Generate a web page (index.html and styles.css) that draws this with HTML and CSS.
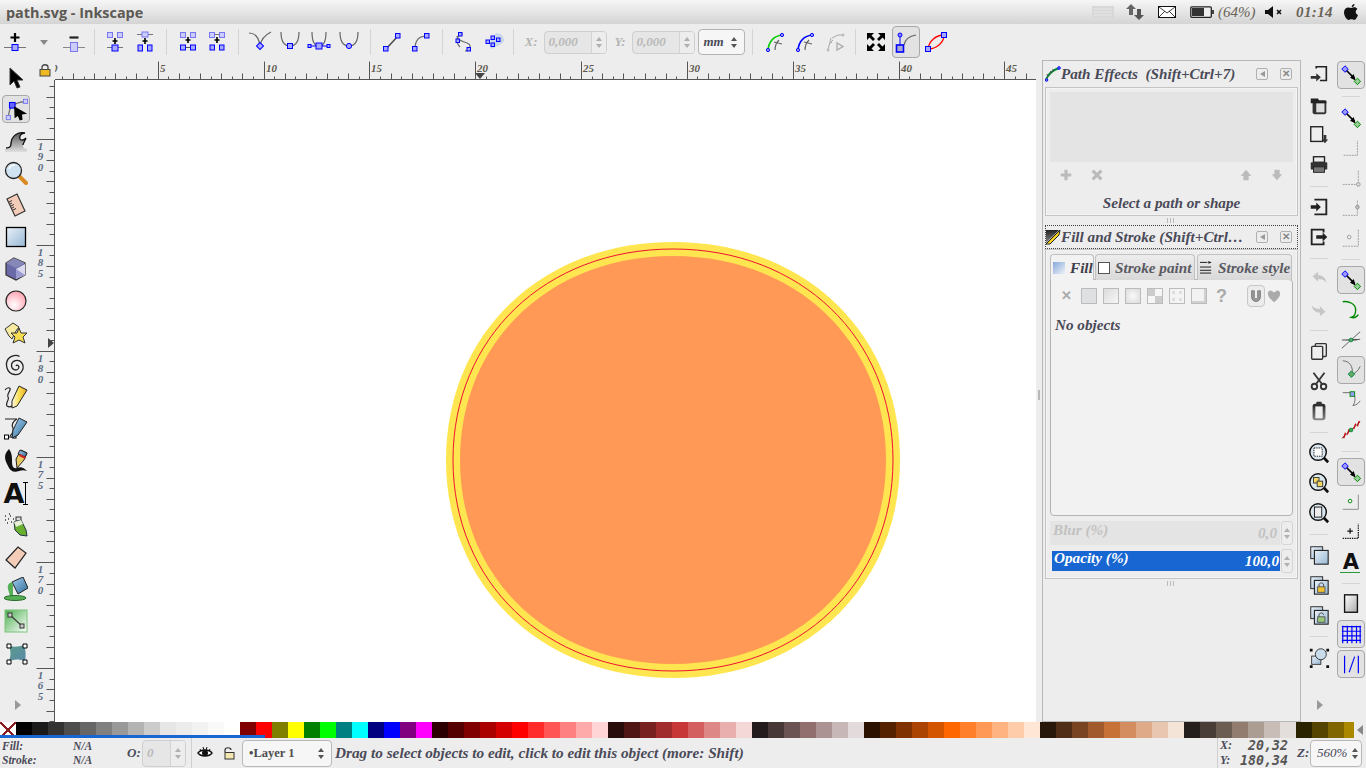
FILE: index.html
```html
<!DOCTYPE html>
<html lang="en">
<head>
  <meta charset="UTF-8" />
  <title>path.svg - Inkscape</title>
  <link rel="stylesheet" href="styles.css">
</head>
<body>
  <svg class="defs" aria-hidden="true">
    <defs>
      <linearGradient id="g-blue" x1="0" y1="0" x2="1" y2="1"><stop offset="0" stop-color="#e8f0f8"/><stop offset="1" stop-color="#98b8d4"/></linearGradient>
      <linearGradient id="g-gray" x1="0" y1="0" x2="0" y2="1"><stop offset="0" stop-color="#555"/><stop offset="1" stop-color="#e0e0e0"/></linearGradient>
      <linearGradient id="g-dark" x1="0" y1="0" x2="0" y2="1"><stop offset="0" stop-color="#222"/><stop offset="1" stop-color="#888"/></linearGradient>
      <linearGradient id="g-white" x1="0" y1="0" x2="1" y2="1"><stop offset="0" stop-color="#fff"/><stop offset="1" stop-color="#aaa"/></linearGradient>
      <linearGradient id="g-green" x1="0" y1="0" x2="1" y2="1"><stop offset="0" stop-color="#4caf50"/><stop offset="1" stop-color="#fff"/></linearGradient>
      <linearGradient id="g-teal" x1="0" y1="0" x2="1" y2="1"><stop offset="0" stop-color="#5a9a8a"/><stop offset="1" stop-color="#5a8aa8"/></linearGradient>
      <radialGradient id="g-pink" cx=".4" cy=".7" r=".8"><stop offset="0" stop-color="#fff"/><stop offset="1" stop-color="#ff98a8"/></radialGradient>
      <linearGradient id="g-yellow" x1="0" y1="0" x2="1" y2="0"><stop offset="0" stop-color="#fffbe0"/><stop offset=".5" stop-color="#f8dc50"/><stop offset="1" stop-color="#e8a820"/></linearGradient>
      <linearGradient id="g-bluepen" x1="0" y1="0" x2="1" y2="1"><stop offset="0" stop-color="#a8d0f0"/><stop offset="1" stop-color="#2a6a98"/></linearGradient>
    </defs>

    <!-- node toolbar -->
    <symbol id="n-add" viewBox="0 0 24 24"><path d="M12 3v9M7.5 7.5h9" stroke="#000" stroke-width="2.2"/><path d="M1 17.5h22" stroke="#777"/><rect class="nd" x="9" y="14.5" width="6" height="6"/></symbol>
    <symbol id="n-del" viewBox="0 0 24 24"><path d="M7.5 7.5h9" stroke="#222" stroke-width="2.2"/><path d="M1 17.5h22" stroke="#888"/><rect class="nd-dim" x="8.5" y="12.5" width="7" height="9"/></symbol>
    <symbol id="n-join1" viewBox="0 0 24 24"><path d="M7 4.5h2M15 4.5h2" stroke="#777"/><rect class="nd-dim" x="4.5" y="2.5" width="5" height="5"/><rect class="nd-dim" x="14.5" y="2.5" width="5" height="5"/><path d="M12 8v6M9.5 11h5" stroke="#000" stroke-width="1.6"/><path d="M4 17.5h16" stroke="#777"/><rect class="nd" x="9" y="15" width="6" height="6"/></symbol>
    <symbol id="n-break1" viewBox="0 0 24 24"><path d="M4 4.5h16" stroke="#777"/><rect class="nd-dim" x="9" y="2" width="6" height="5"/><path d="M12 8v6M9.5 11h5" stroke="#000" stroke-width="1.6"/><rect class="nd" x="5" y="15" width="4.5" height="6"/><rect class="nd" x="14.5" y="15" width="4.5" height="6"/></symbol>
    <symbol id="n-join2" viewBox="0 0 24 24"><path d="M7 4.5h2M15 4.5h2" stroke="#777"/><rect class="nd-dim" x="4.5" y="2.5" width="5" height="5"/><rect class="nd-dim" x="14.5" y="2.5" width="5" height="5"/><path d="M12 7v6M9.5 10h5" stroke="#000" stroke-width="1.6"/><path d="M4 17.5h16" stroke="#555"/><rect class="nd" x="4.5" y="15" width="5" height="5"/><rect class="nd" x="14.5" y="15" width="5" height="5"/></symbol>
    <symbol id="n-break2" viewBox="0 0 24 24"><path d="M4 4.5h16" stroke="#777"/><rect class="nd-dim" x="4.5" y="2.5" width="5" height="5"/><rect class="nd-dim" x="14.5" y="2.5" width="5" height="5"/><path d="M12 7v6M9.5 10h5" stroke="#000" stroke-width="1.6"/><rect class="nd" x="5" y="15" width="4.5" height="5"/><rect class="nd" x="14.5" y="15" width="4.5" height="5"/></symbol>
    <symbol id="n-cusp" viewBox="0 0 24 24"><path d="M1 3c7 0 10 5 11 13 1-7 5-11 11-14" class="cv"/><rect class="nd" x="9.5" y="13.5" width="5" height="5" transform="rotate(45 12 16)"/></symbol>
    <symbol id="n-smooth" viewBox="0 0 24 24"><path d="M3 2c0 10 4 14 9 14s9-4 9-14" class="cv"/><rect class="nd" x="9.5" y="13.5" width="5" height="5"/></symbol>
    <symbol id="n-sym" viewBox="0 0 24 24"><path d="M5 2c0 10 3 14 7 14s7-4 7-14" class="cv"/><path d="M2 16h20" stroke="#00f"/><rect class="nd" x="9" y="13" width="6" height="6"/><rect class="nd" x="1" y="14.5" width="3" height="3"/><rect class="nd" x="20" y="14.5" width="3" height="3"/></symbol>
    <symbol id="n-auto" viewBox="0 0 24 24"><path d="M3 2c0 10 4 14 9 14s9-4 9-14" class="cv"/><circle class="nd" cx="12" cy="16" r="2.6"/></symbol>
    <symbol id="n-line" viewBox="0 0 24 24"><path d="M6 19 18 6" stroke="#444" stroke-width="1.4"/><rect class="nd" x="3.5" y="16.5" width="4.5" height="4.5"/><rect class="nd" x="15.5" y="3.5" width="4.5" height="4.5"/></symbol>
    <symbol id="n-curve" viewBox="0 0 24 24"><path d="M6 19C6 10 10 6 18 6" class="cv"/><rect class="nd" x="3.5" y="16.5" width="4.5" height="4.5"/><rect class="nd" x="15.5" y="3.5" width="4.5" height="4.5"/></symbol>
    <symbol id="n-obj" viewBox="0 0 24 24"><path d="M5 6c0 7 13 5 13 10 0 3-2 5-5 5M11 4c-6 0-8 8-3 13" class="cv"/><rect class="nd" x="6.5" y="2.5" width="3.5" height="3.5"/><rect class="nd" x="4" y="9" width="3.5" height="3.5"/><rect class="nd" x="15" y="17.5" width="3.5" height="3.5"/></symbol>
    <symbol id="n-stroke" viewBox="0 0 24 24"><path d="M14 3c6 0 8 4 8 8-2 4-8 5-12 8-3-2-3-6-1-9z" fill="#c8d8e8"/><rect class="nd" x="4" y="10" width="3.5" height="3.5"/><rect class="nd" x="9" y="13" width="3.5" height="3.5"/><rect class="nd" x="9" y="6" width="3.5" height="3.5"/><rect class="nd" x="14.5" y="8" width="3.5" height="3.5"/></symbol>
    <symbol id="n-edit1" viewBox="0 0 24 24"><path d="M5 20C6 10 12 6 19 5" fill="none" stroke="#0c0" stroke-width="1.6"/><path d="M12 20c0-5 2-8 4-10M11 12l8 2" class="cv" stroke="#222"/><circle class="nd" cx="5" cy="20" r="1.6"/><circle class="nd" cx="19" cy="5" r="1.6"/></symbol>
    <symbol id="n-edit2" viewBox="0 0 24 24"><path d="M5 20C6 10 12 6 19 5" fill="none" stroke="#00f" stroke-width="1.6"/><path d="M12 20c0-5 2-8 4-10M11 12l8 2" class="cv" stroke="#222"/><circle class="nd" cx="5" cy="20" r="1.6"/><circle class="nd" cx="19" cy="5" r="1.6"/></symbol>
    <symbol id="n-edit3" viewBox="0 0 24 24"><path d="M5 20 8 8M8 12l2-2M6 14l3-2M9 8l6-3 5 0" fill="none" stroke="#aaa"/><path d="M14 13v7l6-3.5z" fill="none" stroke="#aaa" stroke-width="1.3"/><circle cx="5" cy="20" r="1.5" fill="#bbb"/><circle cx="20" cy="5" r="1.5" fill="#bbb"/></symbol>
    <symbol id="n-fit" viewBox="0 0 24 24"><path d="M3 3h7l-2.5 2.5L11 9l-2 2-3.5-3.5L3 10zM21 3v7l-2.5-2.5L15 11l-2-2 3.5-3.5L14 3zM3 21v-7l2.5 2.5L9 13l2 2-3.5 3.5L10 21zM21 21h-7l2.5-2.5L13 15l2-2 3.5 3.5L21 14z" fill="#000"/></symbol>
    <symbol id="n-handles" viewBox="0 0 24 24"><path d="M6 5v12" stroke="#00f"/><circle cx="6" cy="5" r="2" fill="#88f" stroke="#00f"/><path d="M10 15c1-6 6-9 12-10" class="cv"/><rect x="2.5" y="15" width="7" height="7" fill="#aac" stroke="#00f" stroke-width="1.6"/></symbol>
    <symbol id="n-outline" viewBox="0 0 24 24"><path d="M4 19C5 11 12 5 20 5M4 19c8 0 16-6 16-14" fill="none" stroke="#f00" stroke-width="1.3"/><rect class="nd" x="1.5" y="16.5" width="5" height="5"/><rect class="nd" x="17.5" y="2.5" width="5" height="5"/></symbol>

    <!-- toolbox -->
    <symbol id="t-select" viewBox="0 0 24 24"><path d="M6 3v17l4-4 3 7 3-1-3-7h6z" fill="#000" stroke="#333"/></symbol>
    <symbol id="t-node" viewBox="0 0 28 28"><path d="M6 23C6 14 9 7 24 6" class="cv"/><rect class="nd-dim" x="3.5" y="21" width="4.5" height="4.5"/><rect class="nd-dim" x="22" y="3.5" width="4.5" height="4.5"/><rect x="7" y="7" width="6" height="6" fill="#66f" stroke="#00f" stroke-width="1.2"/><path d="M12 11l14 8-5.5 1 .5 5.5-3 1-2-5-3.5 2.500z" fill="#000"/></symbol>
    <symbol id="t-tweak" viewBox="0 0 24 24"><path d="M1 23v-3c2 0 5-1 5-3 0-7 6-16 15-13-4 0-6 3-5 6 1 2 4 1 6-1-1 4-3 6-3 8 0 2 2 3 4 3v3z" fill="url(#g-gray)"/><path d="M2 19c3 0 5-1 5-4 0-7 6-13 14-11-4 0-6 3-5 6 1 2 4 1 6-1-1 3-3 5-3 7" fill="none" stroke="#111" stroke-width="1.3"/></symbol>
    <symbol id="t-zoom" viewBox="0 0 24 24"><path d="M14 14l8 8" stroke="#d88a20" stroke-width="4" stroke-linecap="round"/><circle cx="9.5" cy="9.5" r="8" fill="#cfe3f2" stroke="#222" stroke-width="1.3"/><path d="M5 8c1-3 3-4 6-4" fill="none" stroke="#fff" stroke-width="1.5"/></symbol>
    <symbol id="t-measure" viewBox="0 0 24 24"><path d="M3 6 13 1l8 17-10 5z" fill="#f4cdb8" stroke="#333" stroke-width="1.2"/><path d="M5 9l3-1.5M7 13l3-1.5M9 17l3-1.5M6 11l2-1M8 15l2-1" stroke="#333"/></symbol>
    <symbol id="t-rect" viewBox="0 0 24 24"><rect x="2.5" y="2.5" width="19" height="19" fill="url(#g-blue)" stroke="#000" stroke-width="1.3"/></symbol>
    <symbol id="t-box" viewBox="0 0 24 24"><path d="M10 1l11 5v12l-9 5-10-5V6z" fill="#6a6aa8" stroke="#333" stroke-width="1.2"/><path d="M2 6l8-5 11 5-9 5z" fill="#8888b8"/><path d="M12 12l9-5v11l-9 4z" fill="#d8d8ee"/><path d="M12 12l9 6-9 4z" fill="#9a9ad0"/></symbol>
    <symbol id="t-ellipse" viewBox="0 0 24 24"><circle cx="12" cy="12" r="10" fill="url(#g-pink)" stroke="#222" stroke-width="1.2"/></symbol>
    <symbol id="t-star" viewBox="0 0 24 24"><path d="M1 8l8-6 6 4-3 4-4 8-3-3z" fill="#f6eaa0" stroke="#333"/><path d="M15 7l2 5 6 0-4 4 2 6-6-3-6 3 2-6-4-4h6z" fill="#f6dc50" stroke="#333"/></symbol>
    <symbol id="t-spiral" viewBox="0 0 24 24"><path d="M12 13c1-2 4 0 2.5 2.5-2 3-7 1-7-3 0-5 7-7 10-3 4 5 0 13-7 12-8-1-10-11-6-16 3-3 8-4 11-2" fill="none" stroke="#222" stroke-width="1.3"/></symbol>
    <symbol id="t-pencil" viewBox="0 0 24 24"><path d="M1 5c2-3 6-3 5 0s-3 4-2 7c2 2-3 6-1 9 3 2 6 0 8-2" fill="none" stroke="#222" stroke-width="1.2"/><path d="M15 1l8 4-10 16-5 2 0-7z" fill="url(#g-yellow)" stroke="#222"/></symbol>
    <symbol id="t-pen" viewBox="0 0 24 24"><path d="M1 2h12c-4 2-6 6-4 9 1 3-1 6-3 8" fill="none" stroke="#222" stroke-width="1.2"/><rect x="0.5" y="18" width="4" height="4" fill="#fff" stroke="#000"/><rect x="9" y="18" width="3" height="3" fill="#fff" stroke="#000"/><path d="M5 20h4" stroke="#000"/><path d="M15 1l8 4-9 13-6 3 1-8z" fill="url(#g-bluepen)" stroke="#222"/></symbol>
    <symbol id="t-calli" viewBox="0 0 24 24"><path d="M5 0C-2 7 2 13 4 17c2 5 6 7 11 5 3-1 5-1 8 0-3-3-6-5-10-3-4 1-5-2-5-7 0-4 0-8-3-12z" fill="#111"/><path d="M17 1l6 3-3 7-7 8-1-9z" fill="#e8c860" stroke="#222"/><path d="M16 1l7 3-2 4-7-3z" fill="url(#g-bluepen)" stroke="#222"/><path d="M15.5 6l6 3" stroke="#c22" stroke-width="2"/></symbol>
    <symbol id="t-spray" viewBox="0 0 24 24"><path d="M1 3h2M4 6h2M1 7h2M6 3h2M3 10h2M7 9h2M9 6h2M5 1h2" stroke="#333" stroke-width="1.3" stroke-dasharray="1 1"/><rect x="12" y="4" width="5" height="4" fill="#ddd" stroke="#333"/><path d="M10 9l7-2 5 10 1 6-7-1-5-5z" fill="#6ab030" stroke="#234"/><path d="M10 9l7-2 2 4-7 3z" fill="#e6eed8"/></symbol>
    <symbol id="t-eraser" viewBox="0 0 24 24"><path d="M2 15 14 2l8 6-11 15z" fill="#f4cdb8" stroke="#222" stroke-width="1.2"/></symbol>
    <symbol id="t-bucket" viewBox="0 0 24 24"><path d="M8 5 19 0l5 11-10 6z" fill="url(#g-bluepen)" stroke="#222"/><path d="M8 5c-3 1-5 3-4 7l2 7h3V9z" fill="#55b055"/><ellipse cx="11" cy="21" rx="11" ry="2.5" fill="#55b055" stroke="#2a6a2a"/></symbol>
    <symbol id="t-grad" viewBox="0 0 24 24"><rect x="1" y="1" width="22" height="22" fill="url(#g-green)" stroke="#7ac47a"/><path d="M6 6l12 11" stroke="#444" stroke-width="1.4"/><rect x="4" y="4" width="4" height="4" fill="#ccc" stroke="#333"/><rect x="16" y="15" width="4" height="4" fill="#ccc" stroke="#333"/></symbol>
    <symbol id="t-mesh" viewBox="0 0 24 24"><path d="M5 5c5 1 10 1 15-1 2 6 2 11 1 16-6-2-11-2-16 0 2-5 2-10 0-15z" fill="url(#g-teal)"/><path d="M3 3h4v4H3zM19 3h4v4h-4zM3 19h4v4H3zM19 19h4v4h-4z" fill="#fff" stroke="#000"/></symbol>

    <!-- command bar -->
    <symbol id="c-import" viewBox="0 0 24 24"><path d="M9 5V3h11v15h-7" fill="none" stroke="#222" stroke-width="1.8"/><path d="M3 13h6v-3l5 4.5-5 4.5v-3H3z" fill="#333"/></symbol>
    <symbol id="c-copies" viewBox="0 0 24 24"><rect x="5" y="7" width="15" height="15" rx="2" fill="#333"/><rect x="9" y="10" width="9" height="10" fill="#ddd"/><path d="M3 5h8l1 2h8v3H3z" fill="#222"/></symbol>
    <symbol id="c-save" viewBox="0 0 24 24"><rect x="3" y="3" width="13" height="16" fill="#eee" stroke="#222" stroke-width="1.5"/><path d="M17 12h3v5h2l-3.5 4-3.5-4h2z" fill="#333"/></symbol>
    <symbol id="c-print" viewBox="0 0 24 24"><rect x="6" y="3" width="12" height="6" fill="#eee" stroke="#222" stroke-width="1.5"/><rect x="3" y="9" width="18" height="8" rx="1" fill="#333"/><rect x="6" y="14" width="12" height="6" fill="#777" stroke="#222"/></symbol>
    <symbol id="c-imp2" viewBox="0 0 24 24"><path d="M7 4h13v16H7" fill="none" stroke="#222" stroke-width="2"/><path d="M3 10h6V7l5 5-5 5v-3H3z" fill="#222"/></symbol>
    <symbol id="c-exp2" viewBox="0 0 24 24"><path d="M17 7V4H4v16h13v-3" fill="none" stroke="#222" stroke-width="2"/><path d="M9 10h7V7l5 5-5 5v-3H9z" fill="#222"/></symbol>
    <symbol id="c-undo" viewBox="0 0 24 24"><path d="M5 9l6-5v4c4 0 8 2 9 8-2-3-5-4-9-4v3z" fill="#c6c6c6"/></symbol>
    <symbol id="c-redo" viewBox="0 0 24 24"><path d="M19 15l-6 5v-4c-4 0-8-2-9-8 2 3 5 4 9 4V9z" fill="#c6c6c6"/></symbol>
    <symbol id="c-copy" viewBox="0 0 24 24"><rect x="8" y="4" width="12" height="14" rx="1" fill="#eee" stroke="#333" stroke-width="1.5"/><rect x="4" y="7" width="12" height="14" rx="1" fill="#eee" stroke="#333" stroke-width="1.5"/></symbol>
    <symbol id="c-cut" viewBox="0 0 24 24"><path d="M6 3l9 12M18 3 9 15" stroke="#333" stroke-width="2"/><circle cx="7" cy="18" r="3" fill="none" stroke="#333" stroke-width="2"/><circle cx="17" cy="18" r="3" fill="none" stroke="#333" stroke-width="2"/></symbol>
    <symbol id="c-paste" viewBox="0 0 24 24"><rect x="5" y="4" width="14" height="18" rx="3" fill="url(#g-dark)"/><rect x="9" y="2" width="6" height="4" rx="1" fill="#333"/><rect x="8" y="7" width="8" height="13" fill="#eee"/></symbol>
    <symbol id="c-zsel" viewBox="0 0 24 24"><path d="M17 17l5 5" stroke="#111" stroke-width="3"/><circle cx="11" cy="11" r="9" fill="#dbe7ee" stroke="#111" stroke-width="1.6"/><rect x="6.5" y="6.5" width="9" height="9" fill="#fff" stroke="#111" stroke-dasharray="1.5 1"/></symbol>
    <symbol id="c-zdraw" viewBox="0 0 24 24"><path d="M17 17l5 5" stroke="#111" stroke-width="3"/><circle cx="11" cy="11" r="9" fill="#dbe7ee" stroke="#111" stroke-width="1.6"/><rect x="6" y="6" width="6" height="6" fill="#f6d860" stroke="#333"/><rect x="10" y="10" width="6" height="6" fill="#f6d860" stroke="#333"/></symbol>
    <symbol id="c-zpage" viewBox="0 0 24 24"><path d="M17 17l5 5" stroke="#111" stroke-width="3"/><circle cx="11" cy="11" r="9" fill="#dbe7ee" stroke="#111" stroke-width="1.6"/><rect x="7" y="5.5" width="8" height="11" fill="#eee" stroke="#111"/></symbol>
    <symbol id="c-dup" viewBox="0 0 24 24"><rect x="3" y="3" width="13" height="13" fill="url(#g-blue)" stroke="#222"/><rect x="7" y="7" width="15" height="15" fill="url(#g-blue)" stroke="#222" stroke-width="1.2"/></symbol>
    <symbol id="c-clone" viewBox="0 0 24 24"><rect x="3" y="3" width="13" height="13" fill="url(#g-blue)" stroke="#222"/><rect x="7" y="7" width="15" height="15" fill="url(#g-blue)" stroke="#222" stroke-width="1.2"/><path d="M12 14v-2c0-3 5-3 5 0v2" fill="none" stroke="#444"/><rect x="10.5" y="14" width="8" height="6" fill="#f0c030" stroke="#555"/></symbol>
    <symbol id="c-unclone" viewBox="0 0 24 24"><rect x="3" y="3" width="13" height="13" fill="url(#g-blue)" stroke="#222"/><rect x="7" y="7" width="15" height="15" fill="url(#g-blue)" stroke="#222" stroke-width="1.2"/><path d="M12 14v-2c0-3 5-3 5 0" fill="none" stroke="#444"/><rect x="10.5" y="14" width="8" height="6" fill="#98c878" stroke="#555"/></symbol>
    <symbol id="c-group" viewBox="0 0 24 24"><rect x="4" y="11" width="10" height="9" fill="url(#g-blue)" stroke="#333"/><circle cx="14" cy="9" r="6" fill="#c8dcec" stroke="#333"/><path d="M2 3h3v3H2zM20 3h3v3h-3zM2 21h3v3H2zM20 21h3v3h-3z" fill="#111"/></symbol>

    <!-- snap bar -->
    <symbol id="s-snap" viewBox="0 0 24 24"><path d="M6 6l10 10" stroke="#000" stroke-width="1.8"/><path d="M17 18l-6-3 4-4z" fill="#000"/><rect x="3" y="3" width="5" height="5" fill="#99f" stroke="#00f" transform="rotate(45 5.5 5.5)"/><rect x="16.5" y="16.5" width="5" height="5" fill="#9c9" stroke="#080" transform="rotate(45 19 19)"/></symbol>
    <symbol id="s-bbox" viewBox="0 0 24 24"><path d="M4 20h15V4" fill="none" stroke="#999" stroke-dasharray="2 1"/></symbol>
    <symbol id="s-bbedge" viewBox="0 0 24 24"><path d="M3 19h17V3" fill="none" stroke="#999" stroke-dasharray="2 1"/><circle cx="20" cy="19" r="2" fill="#ddd" stroke="#999"/></symbol>
    <symbol id="s-bbmid" viewBox="0 0 24 24"><path d="M3 20h16V3" fill="none" stroke="#999" stroke-dasharray="2 1"/><circle cx="19" cy="11" r="2" fill="#bbb" stroke="#999"/></symbol>
    <symbol id="s-bbcen" viewBox="0 0 24 24"><path d="M3 21h17V3" fill="none" stroke="#999" stroke-dasharray="2 1"/><circle cx="10" cy="11" r="2" fill="#eee" stroke="#999"/></symbol>
    <symbol id="s-path" viewBox="0 0 24 24"><path d="M3 3c6-1 15 2 14 10 0 3-2 6-5 7 3 1 6 0 8-3" fill="none" stroke="#080" stroke-width="1.5"/></symbol>
    <symbol id="s-isect" viewBox="0 0 24 24"><path d="M2 21 22 3M2 12c8 0 14 1 20-1" stroke="#555"/><circle cx="12" cy="12" r="2" fill="#6a6" stroke="#084"/></symbol>
    <symbol id="s-cusp" viewBox="0 0 24 24"><path d="M3 2c7 0 12 6 10 15" fill="none" stroke="#666"/><path d="M22 8c-2 5-5 7-9 9" fill="none" stroke="#666"/><rect x="10" y="14" width="5" height="5" fill="#6a6" stroke="#084" transform="rotate(45 12.5 16.5)"/></symbol>
    <symbol id="s-smooth" viewBox="0 0 24 24"><path d="M3 4h9c6 1 5 11 2 14 3 0 6-2 8-5" fill="none" stroke="#666"/><rect x="11" y="3" width="5" height="5" fill="#99f" stroke="#080"/></symbol>
    <symbol id="s-mid" viewBox="0 0 24 24"><path d="M2 21 22 3" stroke="#444"/><path d="M4 21l2-6M8 17l2-6M15 11l2-6M19 8l2-6" stroke="#c00" stroke-width="1.4"/><circle cx="12" cy="12" r="2" fill="#4a4" stroke="#084"/></symbol>
    <symbol id="s-center" viewBox="0 0 24 24"><path d="M3 20h17V4" fill="none" stroke="#888"/><circle cx="11" cy="11" r="2" fill="none" stroke="#080"/></symbol>
    <symbol id="s-plus" viewBox="0 0 24 24"><path d="M3 19h17V3" fill="none" stroke="#111" stroke-dasharray="1.5 1" stroke-width="1.4"/><path d="M11 8v6M8 11h6" stroke="#111" stroke-width="1.3"/></symbol>
    <symbol id="s-page" viewBox="0 0 24 24"><rect x="5" y="2" width="14" height="19" fill="url(#g-white)" stroke="#111" stroke-width="1.5"/></symbol>
    <symbol id="s-grid" viewBox="0 0 24 24"><path d="M3 3v19M8 3v19M13 3v19M18 3v19M22 3v19M2 4h21M2 9h21M2 14h21M2 19h21" stroke="#00f" stroke-width="1.3"/></symbol>
    <symbol id="s-guide" viewBox="0 0 24 24"><path d="M5 3v19M20 3v19" stroke="#00f" stroke-width="1.3"/><path d="M10 21 16 4" stroke="#00f" stroke-width="1.2"/></symbol>

    <!-- dialogs and small bits -->
    <symbol id="d-lpe" viewBox="0 0 16 16"><path d="M1 14C3 8 8 4 14 2" fill="none" stroke="#083" stroke-width="2"/><path d="M5 8l1-3M8 6l0-3M3 11l-1-3" stroke="#555"/><circle cx="1.5" cy="14" r="1.3" fill="#88f" stroke="#00f"/><circle cx="14" cy="2" r="1.3" fill="#88f" stroke="#00f"/></symbol>
    <symbol id="d-fill" viewBox="0 0 16 16"><path d="M1 1h13L1 14z" fill="url(#g-dark)"/><path d="M1 15 12 4l3-3-1 5-9 9z" fill="#f4d020" stroke="#222"/></symbol>
    <symbol id="d-plus" viewBox="0 0 16 16"><path d="M8 2v12M2 8h12" stroke="#bbb" stroke-width="3.6"/></symbol>
    <symbol id="d-x" viewBox="0 0 16 16"><path d="M3 3l10 10M13 3 3 13" stroke="#bbb" stroke-width="3.6"/></symbol>
    <symbol id="d-up" viewBox="0 0 16 16"><path d="M8 2l6 7h-3v5H5V9H2z" fill="#bbb"/></symbol>
    <symbol id="d-down" viewBox="0 0 16 16"><path d="M8 14 2 7h3V2h6v5h3z" fill="#bbb"/></symbol>
    <symbol id="d-stroke" viewBox="0 0 14 14"><path d="M0 1.5h8M0 6.5h12M0 10h12M0 13h12" stroke="#111"/><path d="M9 0l3.5 1.5L9 3z" fill="#111"/></symbol>
    <symbol id="d-bolt" viewBox="0 0 16 16"><path d="M3 2h3v7c0 3 4 3 4 0V2h3v7c0 7-10 7-10 0z" fill="#999" stroke="#777"/></symbol>
    <symbol id="d-heart" viewBox="0 0 16 16"><path d="M8 15C3 11 1 8 1 5c0-3 3-4 4-3l3 2 3-2c1-1 4 0 4 3 0 3-2 6-7 10z" fill="#aaa"/></symbol>
    <symbol id="d-lock" viewBox="0 0 14 14"><path d="M4 7V4c0-3 6-3 6 0v3" fill="none" stroke="#444" stroke-width="1.3"/><rect x="2" y="6.5" width="10" height="6.5" fill="#f0b820" stroke="#444"/></symbol>
    <symbol id="d-eye" viewBox="0 0 16 16"><path d="M1 8c3-4 11-4 14 0-3 4-11 4-14 0z" fill="#fff" stroke="#111" stroke-width="1.3"/><circle cx="8" cy="8" r="3" fill="#111"/><path d="M3 4l1 2M6 2l1 3M10 2 9 5M13 4l-1 2" stroke="#111"/></symbol>
    <symbol id="d-unlock" viewBox="0 0 14 14"><path d="M3 6V4c0-3 6-3 6 0" fill="none" stroke="#333" stroke-width="1.2"/><rect x="3" y="6.5" width="9" height="6.5" fill="#f4e8b0" stroke="#333"/></symbol>
    <symbol id="d-key" viewBox="0 0 22 12"><rect width="22" height="12" fill="#d8d8d8"/><path d="M2 3h18M2 6h18M2 9h18" stroke="#e8e8e8"/></symbol>
    <symbol id="d-net" viewBox="0 0 18 16"><path d="M5 0l5 5H7v6H3V5H0z" fill="#666"/><path d="M13 16l5-5h-3V5h-4v6H8z" fill="#555"/></symbol>
    <symbol id="d-mail" viewBox="0 0 18 12"><rect x=".5" y=".5" width="17" height="11" fill="#fff" stroke="#111"/><path d="M1 1l8 6 8-6M1 11l6-6M17 11l-6-6" fill="none" stroke="#111" stroke-width=".8"/></symbol>
    <symbol id="d-batt" viewBox="0 0 24 12"><rect x=".8" y=".8" width="20.5" height="10.5" rx="1" fill="#eee" stroke="#222" stroke-width="1.3"/><rect x="2" y="2" width="12" height="8" fill="#333"/><rect x="22" y="4" width="2" height="4" fill="#444"/></symbol>
    <symbol id="d-vol" viewBox="0 0 18 12"><path d="M0 4h3l5-4v12L3 8H0z" fill="#111"/><path d="M12 4l4 4M16 4l-4 4" stroke="#111" stroke-width="1.6"/></symbol>
    <symbol id="d-apple" viewBox="0 0 16 18"><path d="M11.5 1c.2 1.500-1 3-2.800 3.200C8.500 2.700 10 1.200 11.500 1zM8.400 5c1 0 1.800-.7 3-.7 1.200 0 2.300.5 3 1.600-2.500 1.500-2 5 .6 6-.8 2.200-2.200 5-3.800 5-1 0-1.400-.7-2.700-.7s-1.800.7-2.700.7C3.800 17 1 13 1 9.500 1 6.300 3.200 4.500 5.200 4.500c1.300 0 2.300.5 3.200.5z" fill="#111"/></symbol>
  </svg>

  <header class="titlebar">
    <div class="app-title">path.svg - Inkscape</div>
    <div class="tray">
      <svg class="tray-key"><use href="#d-key"/></svg>
      <svg class="tray-net"><use href="#d-net"/></svg>
      <svg class="tray-mail"><use href="#d-mail"/></svg>
      <svg class="tray-batt"><use href="#d-batt"/></svg>
      <span class="tray-pct">(64%)</span>
      <svg class="tray-vol"><use href="#d-vol"/></svg>
      <span class="tray-clock">01:14</span>
      <svg class="tray-apple"><use href="#d-apple"/></svg>
    </div>
  </header>

  <div class="toolbar">
    <button class="tb"><svg class="ic"><use href="#n-add"/></svg></button>
    <button class="tb"><span class="drop"></span></button>
    <button class="tb"><svg class="ic"><use href="#n-del"/></svg></button>
    <span class="sep sep-narrow"></span>
    <button class="tb"><svg class="ic"><use href="#n-join1"/></svg></button>
    <button class="tb"><svg class="ic"><use href="#n-break1"/></svg></button>
    <span class="sep"></span>
    <button class="tb"><svg class="ic"><use href="#n-join2"/></svg></button>
    <button class="tb"><svg class="ic"><use href="#n-break2"/></svg></button>
    <span class="sep"></span>
    <button class="tb"><svg class="ic"><use href="#n-cusp"/></svg></button>
    <button class="tb"><svg class="ic"><use href="#n-smooth"/></svg></button>
    <button class="tb"><svg class="ic"><use href="#n-sym"/></svg></button>
    <button class="tb"><svg class="ic"><use href="#n-auto"/></svg></button>
    <span class="sep"></span>
    <button class="tb"><svg class="ic"><use href="#n-line"/></svg></button>
    <button class="tb"><svg class="ic"><use href="#n-curve"/></svg></button>
    <span class="sep"></span>
    <button class="tb"><svg class="ic"><use href="#n-obj"/></svg></button>
    <button class="tb"><svg class="ic"><use href="#n-stroke"/></svg></button>
    <span class="sep sep-tight"></span>
    <span class="coord-label">X:</span>
    <div class="num num-off"><span class="num-val">0,000</span><span class="spin"></span></div>
    <span class="coord-label">Y:</span>
    <div class="num num-off"><span class="num-val">0,000</span><span class="spin"></span></div>
    <div class="unit"><span>mm</span><span class="spin spin-dark"></span></div>
    <span class="sep sep-wide"></span>
    <button class="tb tb-w"><svg class="ic"><use href="#n-edit1"/></svg></button>
    <button class="tb tb-w"><svg class="ic"><use href="#n-edit2"/></svg></button>
    <button class="tb tb-w"><svg class="ic"><use href="#n-edit3"/></svg></button>
    <span class="sep sep-narrow"></span>
    <button class="tb"><svg class="ic"><use href="#n-fit"/></svg></button>
    <button class="tb tb-on"><svg class="ic"><use href="#n-handles"/></svg></button>
    <button class="tb tb-w"><svg class="ic"><use href="#n-outline"/></svg></button>
  </div>

  <div class="workspace">
    <nav class="toolbox">
      <button class="tool"><svg class="ic"><use href="#t-select"/></svg></button>
      <button class="tool tool-on"><svg class="ic-28"><use href="#t-node"/></svg></button>
      <button class="tool"><svg class="ic"><use href="#t-tweak"/></svg></button>
      <button class="tool"><svg class="ic"><use href="#t-zoom"/></svg></button>
      <button class="tool"><svg class="ic"><use href="#t-measure"/></svg></button>
      <button class="tool"><svg class="ic"><use href="#t-rect"/></svg></button>
      <button class="tool"><svg class="ic"><use href="#t-box"/></svg></button>
      <button class="tool"><svg class="ic"><use href="#t-ellipse"/></svg></button>
      <button class="tool"><svg class="ic"><use href="#t-star"/></svg></button>
      <button class="tool"><svg class="ic"><use href="#t-spiral"/></svg></button>
      <button class="tool"><svg class="ic"><use href="#t-pencil"/></svg></button>
      <button class="tool"><svg class="ic"><use href="#t-pen"/></svg></button>
      <button class="tool"><svg class="ic"><use href="#t-calli"/></svg></button>
      <button class="tool tool-text">A<span class="caret"></span></button>
      <button class="tool"><svg class="ic"><use href="#t-spray"/></svg></button>
      <button class="tool"><svg class="ic"><use href="#t-eraser"/></svg></button>
      <button class="tool"><svg class="ic"><use href="#t-bucket"/></svg></button>
      <button class="tool"><svg class="ic"><use href="#t-grad"/></svg></button>
      <button class="tool"><svg class="ic"><use href="#t-mesh"/></svg></button>
      <span class="more more-tools"></span>
    </nav>

    <div class="canvas-wrap">
      <div class="corner"><svg class="lock"><use href="#d-lock"/></svg></div>
      <div class="ruler ruler-h" id="rulerH"></div>
      <div class="ruler ruler-v" id="rulerV"></div>
      <div class="canvas">
        <svg class="drawing" viewBox="0 0 981 642">
          <path d="M391 380C391 253.6 486.3 162 618 162C749.7 162 845 253.6 845 380C845 506.4 749.7 598 618 598C486.3 598 391 506.4 391 380z" fill="#ffe650"/>
          <path d="M405 380C405 261.7 494.5 176 618 176C741.5 176 831 261.7 831 380C831 498.3 741.5 584 618 584C494.5 584 405 498.3 405 380z" fill="#ff9955"/>
          <path d="M398 380C398 257.6 490.4 169 618 169C745.6 169 838 257.6 838 380C838 502.4 745.6 591 618 591C490.4 591 398 502.4 398 380z" fill="none" stroke="#ee1133"/>
        </svg>
      </div>
    </div>

    <div class="dock-handle"></div>

    <aside class="dock">
      <section class="panel">
        <div class="panel-head">
          <svg class="panel-icon"><use href="#d-lpe"/></svg>
          <span class="panel-title">Path Effects&nbsp; (Shift+Ctrl+7)</span>
          <span class="head-btn head-arrow"></span>
          <span class="head-btn head-close"></span>
        </div>
        <div class="frame frame-lpe">
          <div class="lpe-list"></div>
          <div class="lpe-actions">
            <svg class="ic-14"><use href="#d-plus"/></svg>
            <svg class="ic-14 gap-x"><use href="#d-x"/></svg>
            <svg class="ic-14 push"><use href="#d-up"/></svg>
            <svg class="ic-14 gap-x"><use href="#d-down"/></svg>
          </div>
          <div class="lpe-msg">Select a path or shape</div>
        </div>
      </section>
      <div class="grip"></div>
      <section class="panel">
        <div class="panel-head panel-head-focus">
          <svg class="panel-icon"><use href="#d-fill"/></svg>
          <span class="panel-title">Fill and Stroke (Shift+Ctrl…</span>
          <span class="head-btn head-arrow"></span>
          <span class="head-btn head-close"></span>
        </div>
        <div class="frame frame-fs">
          <div class="tabs">
            <div class="tab tab-fill tab-on"><span class="mini mini-fill"></span>Fill</div>
            <div class="tab tab-paint"><span class="mini mini-paint"></span>Stroke paint</div>
            <div class="tab tab-style"><svg class="mini-svg"><use href="#d-stroke"/></svg>Stroke style</div>
          </div>
          <div class="tab-body">
            <div class="paint-row">
              <span class="paint-x">✕</span>
              <span class="pt pt-flat"></span>
              <span class="pt pt-lin"></span>
              <span class="pt pt-rad"></span>
              <span class="pt pt-pat"></span>
              <span class="pt pt-swatch"></span>
              <span class="pt pt-unset"></span>
              <span class="paint-q">?</span>
              <span class="rule-btn"><svg class="ic-14"><use href="#d-bolt"/></svg></span>
              <svg class="ic-14 heart"><use href="#d-heart"/></svg>
            </div>
            <div class="no-obj">No objects</div>
          </div>
          <div class="scale scale-blur">
            <div class="scale-bar">
              <span class="scale-label">Blur (%)</span>
              <span class="scale-val">0,0</span>
            </div>
            <span class="spin spin-box"></span>
          </div>
          <div class="scale scale-op">
            <div class="scale-bar">
              <span class="scale-label">Opacity (%)</span>
              <span class="scale-val">100,0</span>
            </div>
            <span class="spin spin-box"></span>
          </div>
        </div>
      </section>
      <div class="grip"></div>
    </aside>

    <div class="cmdbar">
      <button class="cb"><svg class="ic-20"><use href="#c-import"/></svg></button>
      <button class="cb"><svg class="ic-20"><use href="#c-copies"/></svg></button>
      <button class="cb"><svg class="ic-20"><use href="#c-save"/></svg></button>
      <button class="cb"><svg class="ic-20"><use href="#c-print"/></svg></button>
      <span class="hsep"></span>
      <button class="cb"><svg class="ic-20"><use href="#c-imp2"/></svg></button>
      <button class="cb"><svg class="ic-20"><use href="#c-exp2"/></svg></button>
      <span class="hsep"></span>
      <button class="cb"><svg class="ic-20"><use href="#c-undo"/></svg></button>
      <button class="cb"><svg class="ic-20"><use href="#c-redo"/></svg></button>
      <span class="hsep"></span>
      <button class="cb"><svg class="ic-20"><use href="#c-copy"/></svg></button>
      <button class="cb"><svg class="ic-20"><use href="#c-cut"/></svg></button>
      <button class="cb"><svg class="ic-20"><use href="#c-paste"/></svg></button>
      <span class="hsep"></span>
      <button class="cb"><svg class="ic-20"><use href="#c-zsel"/></svg></button>
      <button class="cb"><svg class="ic-20"><use href="#c-zdraw"/></svg></button>
      <button class="cb"><svg class="ic-20"><use href="#c-zpage"/></svg></button>
      <span class="hsep"></span>
      <button class="cb"><svg class="ic-20"><use href="#c-dup"/></svg></button>
      <button class="cb"><svg class="ic-20"><use href="#c-clone"/></svg></button>
      <button class="cb"><svg class="ic-20"><use href="#c-unclone"/></svg></button>
      <span class="hsep"></span>
      <button class="cb"><svg class="ic-20"><use href="#c-group"/></svg></button>
      <span class="more more-cmd"></span>
    </div>

    <div class="snapbar">
      <button class="cb cb-on"><svg class="ic-20"><use href="#s-snap"/></svg></button>
      <span class="hsep hsep-snap"></span>
      <button class="cb"><svg class="ic-20"><use href="#s-snap"/></svg></button>
      <button class="cb"><svg class="ic-20"><use href="#s-bbox"/></svg></button>
      <button class="cb"><svg class="ic-20"><use href="#s-bbedge"/></svg></button>
      <button class="cb"><svg class="ic-20"><use href="#s-bbmid"/></svg></button>
      <button class="cb"><svg class="ic-20"><use href="#s-bbcen"/></svg></button>
      <span class="hsep"></span>
      <button class="cb cb-on"><svg class="ic-20"><use href="#s-snap"/></svg></button>
      <button class="cb"><svg class="ic-20"><use href="#s-path"/></svg></button>
      <button class="cb"><svg class="ic-20"><use href="#s-isect"/></svg></button>
      <button class="cb cb-on"><svg class="ic-20"><use href="#s-cusp"/></svg></button>
      <button class="cb"><svg class="ic-20"><use href="#s-smooth"/></svg></button>
      <button class="cb"><svg class="ic-20"><use href="#s-mid"/></svg></button>
      <span class="hsep"></span>
      <button class="cb cb-on"><svg class="ic-20"><use href="#s-snap"/></svg></button>
      <button class="cb"><svg class="ic-20"><use href="#s-center"/></svg></button>
      <button class="cb"><svg class="ic-20"><use href="#s-plus"/></svg></button>
      <button class="cb cb-text">A</button>
      <span class="hsep"></span>
      <button class="cb"><svg class="ic-20"><use href="#s-page"/></svg></button>
      <button class="cb cb-on"><svg class="ic-20"><use href="#s-grid"/></svg></button>
      <button class="cb cb-on"><svg class="ic-20"><use href="#s-guide"/></svg></button>
    </div>
  </div>

  <div class="palette">
    <div class="no-color"></div>
    <div class="swatches" id="swatches"></div>
    <span class="palette-arrow"></span>
    <div class="progress"></div>
  </div>

  <footer class="statusbar">
    <div class="sel-style">
      <span>Fill:</span><span>N/A</span>
      <span>Stroke:</span><span>N/A</span>
    </div>
    <span class="op-label">O:</span>
    <div class="num num-off num-op"><span class="num-val">0</span><span class="spin"></span></div>
    <span class="vline"></span>
    <svg class="st-eye"><use href="#d-eye"/></svg>
    <svg class="st-lock"><use href="#d-unlock"/></svg>
    <div class="layer"><span>•Layer 1</span><span class="spin spin-dark"></span></div>
    <div class="message">Drag to select objects to edit, click to edit this object (more: Shift)</div>
    <div class="coords">
      <span class="coord-l">X:</span><span class="coord-v">20,32</span>
      <span class="coord-l">Y:</span><span class="coord-v">180,34</span>
    </div>
    <span class="zoom-label">Z:</span>
    <div class="zoom-box"><span class="zoom-val">560%</span><span class="spin spin-dark"></span></div>
  </footer>

  <script src="app.js"></script>
</body>
</html>
```

FILE: styles.css
```css
* {
  box-sizing: border-box;
}
html, body {
  margin: 0;
  padding: 0;
  height: 768px;
  overflow: hidden;
}
body {
  font-family: "Liberation Serif", serif;
  font-weight: bold;
  font-style: italic;
  background: #ededed;
  color: #4a4a58;
}
button {
  border: none;
  background: none;
  padding: 0;
  margin: 0;
  display: flex;
  align-items: center;
  justify-content: center;
  font: inherit;
  color: inherit;
}
svg {
  display: block;
  overflow: hidden;
}
.defs {
  width: 0;
  height: 0;
}
.nd {
  fill: #a8a8ff;
  stroke: #00f;
}
.nd-dim {
  fill: #ccccff;
  stroke: #7777ee;
}
.cv {
  fill: none;
  stroke: #666;
  stroke-width: 1.2;
}
.ic { width: 24px; height: 24px; }
.ic-28 { width: 26px; height: 26px; }
.ic-20 { width: 22px; height: 22px; }
.ic-14 { width: 14px; height: 14px; }

/* title bar */
.titlebar {
  height: 24px;
  display: flex;
  justify-content: space-between;
  align-items: center;
  background: linear-gradient(#f6f6f6, #d4d4d4);
}
.app-title {
  font-family: "Open Sans", sans-serif;
  font-style: normal;
  font-weight: bold;
  font-size: 14.4px;
  color: #5c5852;
  padding-left: 6px;
}
.tray {
  display: flex;
  align-items: center;
}
.tray-key { width: 22px; height: 12px; margin-right: 12px; }
.tray-net { width: 18px; height: 16px; margin-right: 14px; }
.tray-mail { width: 18px; height: 12px; margin-right: 14px; }
.tray-batt { width: 24px; height: 12px; margin-right: 4px; }
.tray-pct { font-size: 15px; font-weight: normal; color: #6a6358; width: 47px; }
.tray-vol { width: 18px; height: 12px; margin-right: 13px; }
.tray-clock { font-size: 15px; color: #6a6358; width: 47px; letter-spacing: .4px; }
.tray-apple { width: 16px; height: 18px; margin-right: 7px; }

/* node toolbar */
.toolbar {
  height: 36px;
  display: flex;
  align-items: center;
}
.tb {
  width: 29.5px;
  height: 32px;
  flex: none;
}
.tb-w { width: 30px; }
.tb-on {
  width: 28px;
  margin: 0 1px;
  border: 1px solid #a8a8a8;
  border-radius: 4px;
  background: #e2e2e2;
}
.drop {
  border-left: 4px solid transparent;
  border-right: 4px solid transparent;
  border-top: 5px solid #888;
}
.sep {
  width: 13.5px;
  height: 26px;
  flex: none;
  background: linear-gradient(#d4d4d4, #d4d4d4) center / 1px 100% no-repeat;
}
.sep-narrow { width: 12px; }
.sep-tight { width: 10px; }
.sep-wide { width: 15px; }
.coord-label {
  width: 25px;
  padding-right: 6px;
  text-align: right;
  font-size: 13px;
  color: #b4b4b4;
  flex: none;
}
.num {
  width: 63px;
  height: 23px;
  flex: none;
  display: flex;
  align-items: center;
  border: 1px solid #cfcfcf;
  border-radius: 4px;
}
.num-off {
  background: #e6e6e6;
  color: #b8b8b8;
  font-size: 13px;
}
.num-val {
  flex: 1;
  padding-left: 4px;
}
.spin {
  width: 15px;
  height: 100%;
  flex: none;
  display: flex;
  flex-direction: column;
  justify-content: center;
  align-items: center;
  gap: 3px;
  border-left: 1px solid #d4d4d4;
  background: #ededed;
  border-radius: 0 3px 3px 0;
}
.spin::before, .spin::after {
  content: "";
  border-left: 3.5px solid transparent;
  border-right: 3.5px solid transparent;
}
.spin::before { border-bottom: 4px solid #b0b0b0; }
.spin::after { border-top: 4px solid #b0b0b0; }
.spin-dark {
  border-left: none;
  background: none;
}
.spin-dark::before { border-bottom-color: #555; }
.spin-dark::after { border-top-color: #555; }
.unit {
  width: 47px;
  height: 26px;
  margin-left: 3px;
  flex: none;
  display: flex;
  align-items: center;
  justify-content: space-between;
  padding: 0 2px 0 5px;
  font-size: 13px;
  border: 1px solid #b4b4b4;
  border-radius: 4px;
  background: #f6f6f6;
}

/* main row */
.workspace {
  height: 662px;
  display: flex;
}
.toolbox {
  width: 36px;
  flex: none;
  display: flex;
  flex-direction: column;
  align-items: center;
  padding-top: 1px;
  padding-right: 4px;
}
.tool {
  width: 32px;
  height: 32px;
  flex: none;
}
.tool-on {
  width: 28px;
  height: 28px;
  margin: 2px 0;
  border: 1px solid #a8a8a8;
  border-radius: 4px;
  background: #e2e2e2;
}
.tool-text {
  font-family: "DejaVu Sans", sans-serif;
  font-style: normal;
  font-size: 27px;
  color: #111;
}
.caret {
  width: 5px;
  height: 23px;
  margin-left: -1px;
  background:
    linear-gradient(#000, #000) center / 1px 100% no-repeat,
    linear-gradient(#000, #000) top / 100% 1px no-repeat,
    linear-gradient(#000, #000) bottom / 100% 1px no-repeat;
}
.more {
  border-top: 5px solid transparent;
  border-bottom: 5px solid transparent;
  border-left: 6px solid #999;
}
.more-tools {
  margin-top: 31px;
  margin-left: 4px;
}
.canvas-wrap {
  flex: 1;
  display: grid;
  grid-template-columns: 19px 1fr;
  grid-template-rows: 20px 1fr;
  min-width: 0;
}
.corner {
  padding: 3px 0 0 2px;
}
.lock {
  width: 14px;
  height: 14px;
}
.ruler {
  position: relative;
  overflow: hidden;
  background: #ededed;
}
.ruler svg {
  position: absolute;
  left: 0;
  top: 0;
}
.ruler-label {
  position: absolute;
  font-size: 11px;
  line-height: 12px;
  color: #5e5a50;
}
.ruler-v .ruler-label {
  color: #5a6a80;
  width: 9px;
  text-align: center;
  line-height: 10.5px;
}
.canvas {
  background: #fff;
  position: relative;
  overflow: hidden;
}
.drawing {
  width: 981px;
  height: 642px;
}
.dock-handle {
  width: 6px;
  flex: none;
  background: linear-gradient(#b8b8b8, #b8b8b8) 2px 330px / 2px 10px no-repeat;
}

/* dock */
.dock {
  width: 259px;
  flex: none;
  border: 1px solid #b8b8b8;
  padding: 0 2px;
}
.panel-head {
  height: 26px;
  display: flex;
  align-items: center;
}
.panel-head-focus {
  height: 24px;
  padding-bottom: 1px;
  outline: 1px dotted #444;
  outline-offset: -1px;
}
.panel-icon {
  width: 16px;
  height: 16px;
  flex: none;
}
.panel-title {
  flex: 1;
  font-size: 15.2px;
  white-space: nowrap;
  overflow: hidden;
}
.head-btn {
  width: 12px;
  height: 12px;
  flex: none;
  border: 1px solid #b0b0b0;
  border-radius: 2px;
  margin-right: 6px;
  display: flex;
  align-items: center;
  justify-content: center;
}
.head-close {
  margin: 0 6px 0 6px;
}
.head-arrow::before {
  content: "";
  border-top: 3px solid transparent;
  border-bottom: 3px solid transparent;
  border-right: 5px solid #999;
}
.head-close::before {
  content: "✕";
  font-size: 10px;
  font-style: normal;
  line-height: 10px;
  color: #888;
}
.frame {
  border: 1px solid #c4c4c4;
  padding: 0 4px;
  box-shadow: inset 0 0 0 1px #f4f4f4;
}
.frame-lpe {
  height: 129px;
}
.lpe-list {
  height: 70px;
  margin-top: 4px;
  background: #e4e4e4;
}
.lpe-actions {
  display: flex;
  align-items: center;
  margin-top: 6px;
  padding: 0 9px;
  height: 14px;
}
.gap-x { margin-left: 17px; }
.push { margin-left: auto; }
.lpe-msg {
  text-align: center;
  font-size: 15.2px;
  margin-top: 12px;
}
.grip {
  width: 9px;
  height: 9px;
  margin: 0 auto;
  background: linear-gradient(90deg, #bbb 1px, transparent 1px) 0 2px / 3px 5px repeat-x;
}
.frame-fs {
  height: 330px;
}
.tabs {
  display: flex;
  height: 26px;
  margin-top: 4px;
  gap: 1px;
  position: relative;
  z-index: 1;
}
.tab {
  display: flex;
  align-items: center;
  font-size: 15.2px;
  color: #5a5a62;
  border: 1px solid #c0c0c0;
  border-bottom: none;
  border-radius: 4px 4px 0 0;
  background: linear-gradient(#ededed, #d8d8d8);
  white-space: nowrap;
}
.tab-fill { width: 44px; padding-left: 2px; }
.tab-paint { width: 100px; padding-left: 2px; }
.tab-style { width: 95px; margin-left: 1px; padding-left: 2px; }
.tab-on {
  background: #f2f2f2;
  color: #3e3e4a;
}
.mini {
  width: 12px;
  height: 12px;
  margin-right: 5px;
  flex: none;
}
.mini-fill { background: linear-gradient(135deg, #88a8d8, #eef2f8); }
.mini-paint { border: 1px solid #555; background: #fff; }
.mini-svg {
  width: 13px;
  height: 13px;
  margin-right: 5px;
  flex: none;
}
.tab-body {
  height: 237px;
  margin-top: -1px;
  border: 1px solid #b4b4b4;
  border-radius: 0 4px 4px 4px;
  background: #f2f2f2;
  padding: 0 4px;
}
.paint-row {
  display: flex;
  align-items: center;
  height: 28px;
  margin-top: 2px;
  padding-left: 6px;
}
.paint-x {
  font-style: normal;
  color: #aaa;
  font-size: 13px;
  width: 20px;
}
.pt {
  width: 16px;
  height: 16px;
  margin-right: 6px;
  flex: none;
  border: 1px solid #bbb;
}
.pt-flat { background: #dfe0e2; }
.pt-lin { background: linear-gradient(135deg, #dcdcdc, #f6f6f6); }
.pt-rad { background: radial-gradient(#fafafa, #dadada); }
.pt-pat { background: conic-gradient(#f6f6f6 25%, #ccc 0 50%, #f6f6f6 0 75%, #ccc 0); }
.pt-swatch { background: radial-gradient(#ddd 35%, #f4f4f4 40%) 0 0 / 7px 7px; }
.pt-unset { background: #f2f2f2; box-shadow: inset -2px -2px 0 #d0d0d0; }
.paint-q {
  font-family: "Liberation Sans", sans-serif;
  font-style: normal;
  font-size: 18px;
  color: #aaa;
  margin-left: 3px;
  width: 18px;
}
.rule-btn {
  width: 18px;
  height: 22px;
  margin-left: 13px;
  border: 1px solid #c8c8c8;
  border-radius: 4px;
  background: #ececec;
  display: flex;
  align-items: center;
  justify-content: center;
}
.heart { margin-left: 2px; }
.no-obj {
  font-size: 15.2px;
  margin-top: 6px;
}
.scale {
  display: flex;
  align-items: center;
  gap: 1px;
}
.scale-bar {
  flex: 1;
  display: flex;
  justify-content: space-between;
  font-size: 15.2px;
}
.scale-blur {
  height: 24px;
  margin-top: 5px;
}
.scale-blur .scale-bar {
  height: 24px;
  background: #e4e4e4;
  color: #c2c2c2;
  padding: 0 3px;
  line-height: 18px;
}
.scale-blur .scale-val { line-height: 24px; }
.scale-op {
  height: 24px;
  margin-top: 4px;
}
.scale-op .scale-bar {
  height: 20px;
  margin-left: 2px;
  background: #1766d2;
  color: #fff;
  padding: 0 1px 0 2px;
  line-height: 14px;
}
.scale-op .scale-val { line-height: 20px; }
.spin-box {
  width: 12px;
  border: 1px solid #d4d4d4;
  border-radius: 3px;
  background: #ededed;
}

/* command and snap columns */
.cmdbar, .snapbar {
  flex: none;
  display: flex;
  flex-direction: column;
  align-items: center;
}
.cmdbar { width: 35px; }
.snapbar { width: 30px; }
.cb {
  width: 28px;
  height: 30px;
  flex: none;
}
.cb-on {
  border: 1px solid #a8a8a8;
  border-radius: 4px;
  background: #e2e2e2;
  height: 28px;
  margin: 1px 0;
}
.cb-text {
  font-family: "DejaVu Sans", sans-serif;
  font-style: normal;
  font-size: 21px;
  color: #111;
  position: relative;
}
.cb-text::after {
  content: "";
  position: absolute;
  left: 3px;
  bottom: 4px;
  width: 20px;
  height: 1px;
  background: #2a9a3a;
}
.hsep {
  height: 12px;
  width: 18px;
  flex: none;
  background: linear-gradient(#d4d4d4, #d4d4d4) center / 100% 1px no-repeat;
}
.hsep-snap { height: 13px; }
.more-cmd {
  margin-top: auto;
  margin-bottom: 12px;
  margin-left: 2px;
}

/* palette */
.palette {
  height: 16px;
  display: flex;
  position: relative;
}
.no-color {
  width: 16px;
  flex: none;
  background:
    linear-gradient(45deg, transparent 46%, #8a1c1c 46% 54%, transparent 54%),
    linear-gradient(-45deg, transparent 46%, #8a1c1c 46% 54%, transparent 54%),
    #fff;
}
.swatches {
  width: 1338px;
  flex: none;
  display: flex;
  overflow: hidden;
}
.swatch {
  width: 16px;
  height: 16px;
  flex: none;
}
.palette-arrow {
  margin: 3px 0 0 3px;
  border-top: 5px solid transparent;
  border-bottom: 5px solid transparent;
  border-right: 6px solid #888;
  height: 0;
}
.progress {
  position: absolute;
  left: 0;
  bottom: 0;
  width: 265px;
  height: 3px;
  background: #1766d2;
}

/* status bar */
.statusbar {
  height: 30px;
  display: flex;
  align-items: center;
}
.sel-style {
  width: 124px;
  flex: none;
  display: grid;
  grid-template-columns: 71px 1fr;
  padding-left: 2px;
  font-size: 11.5px;
  line-height: 14.5px;
}
.op-label {
  width: 18px;
  font-size: 13px;
  padding-left: 3px;
}
.num-op {
  width: 44px;
  height: 27px;
}
.vline {
  width: 1px;
  height: 30px;
  background: #cfcfcf;
  margin: 0 5px;
}
.st-eye { width: 16px; height: 16px; }
.st-lock { width: 14px; height: 14px; margin-left: 9px; }
.layer {
  width: 90px;
  height: 27px;
  margin-left: 6px;
  flex: none;
  display: flex;
  align-items: center;
  justify-content: space-between;
  padding: 0 3px 0 6px;
  font-style: normal;
  font-size: 12.5px;
  color: #4e4e4e;
  border: 1px solid #b8b8b8;
  border-radius: 4px;
  background: #f6f6f6;
}
.message {
  width: 885px;
  flex: none;
  font-size: 15.25px;
  padding-left: 3px;
  white-space: nowrap;
}
.coords {
  width: 80px;
  height: 30px;
  flex: none;
  display: grid;
  grid-template-columns: 20px 48px;
  border-left: 1px solid #cfcfcf;
  padding-left: 2px;
  line-height: 15px;
}
.coord-l {
  font-size: 12px;
}
.coord-v {
  font-family: "DejaVu Sans Mono", monospace;
  font-size: 13.3px;
  color: #555;
  text-align: right;
  white-space: nowrap;
}
.zoom-label {
  font-size: 13px;
  width: 13px;
}
.zoom-box {
  width: 52px;
  height: 27px;
  flex: none;
  display: flex;
  align-items: center;
  justify-content: space-between;
  padding-left: 6px;
  font-size: 13px;
  font-weight: normal;
  border: 1px solid #b8b8b8;
  border-radius: 4px;
  background: #f6f6f6;
}
```

FILE: app.js
```js
const palette = [
  "#000000", "#1a1a1a", "#333333", "#4d4d4d", "#666666", "#808080", "#999999",
  "#b3b3b3", "#cccccc", "#e6e6e6", "#ececec", "#f2f2f2", "#f9f9f9", "#ffffff",
  "#800000", "#ff0000", "#808000", "#ffff00", "#008000", "#00ff00", "#008080",
  "#00ffff", "#000080", "#0000ff", "#800080", "#ff00ff",
  "#2b0000", "#550000", "#800000", "#aa0000", "#d40000", "#ff0000", "#ff2a2a",
  "#ff5555", "#ff8080", "#ffaaaa", "#ffd5d5",
  "#280b0b", "#501616", "#782121", "#a02c2c", "#c83737", "#d35f5f", "#de8787",
  "#e9afaf", "#f4d7d7",
  "#241c1c", "#483737", "#6c5353", "#916f6f", "#ac9393", "#c8b7b7", "#e3dbdb",
  "#2b1100", "#552200", "#803300", "#aa4400", "#d45500", "#ff6600", "#ff7f2a",
  "#ff9955", "#ffb380", "#ffccaa", "#ffe6d5",
  "#28170b", "#502d16", "#784421", "#a05a2c", "#c87137", "#d38d5f", "#deaa87",
  "#e9c6af", "#f4e3d7",
  "#241f1c", "#483e37", "#6c5d53", "#917c6f", "#ac9d93", "#c8beb7", "#e3dedb",
  "#2b2200", "#554400", "#806600", "#aa8800"
];

const swatches = document.getElementById("swatches");
palette.forEach(color => {
  const div = document.createElement("div");
  div.className = "swatch";
  div.style.background = color;
  swatches.appendChild(div);
});

const step = 105.85 / 10;
const NS = "http://www.w3.org/2000/svg";

function makeRuler(el, width, height) {
  const svg = document.createElementNS(NS, "svg");
  svg.setAttribute("width", width);
  svg.setAttribute("height", height);
  el.appendChild(svg);
  return svg;
}

function addLine(svg, x1, y1, x2, y2) {
  const line = document.createElementNS(NS, "line");
  line.setAttribute("x1", x1);
  line.setAttribute("y1", y1);
  line.setAttribute("x2", x2);
  line.setAttribute("y2", y2);
  line.setAttribute("stroke", "#555");
  svg.appendChild(line);
}

function addLabel(el, text, left, top) {
  const span = document.createElement("span");
  span.className = "ruler-label";
  span.innerHTML = text;
  span.style.left = left + "px";
  span.style.top = top + "px";
  el.appendChild(span);
}

// horizontal ruler, x = 0 is 55px on the page, the 0 mark sits at 51.8
const rulerH = document.getElementById("rulerH");
const svgH = makeRuler(rulerH, 981, 20);
addLine(svgH, 0, 19.5, 981, 19.5);
for (let i = 0; i < 95; i++) {
  const x = Math.round(-3.2 + i * step) + 0.5;
  const len = i % 10 === 0 ? 18 : i % 2 === 0 ? 6 : 3;
  addLine(svgH, x, 19.5 - len, x, 19.5);
  if (i % 10 === 0) addLabel(rulerH, String(i / 2), i === 0 ? -3 : x + 1.5, 2);
}

// vertical ruler, y = 0 is 80px on the page, 190 mark sits at 139
const rulerV = document.getElementById("rulerV");
const svgV = makeRuler(rulerV, 19, 642);
addLine(svgV, 18.5, 0, 18.5, 642);
for (let i = -6; i < 56; i++) {
  const y = Math.round(59 + i * step) + 0.5;
  const tick = ((i % 10) + 10) % 10;
  const len = tick === 0 ? 18 : tick % 2 === 0 ? 8 : 5;
  addLine(svgV, 18.5 - len, y, 18.5, y);
  if (tick === 0) {
    addLabel(rulerV, String(190 - i / 2).split("").join("<br>"), 0, y + 1);
  }
}

const markH = document.createElementNS(NS, "path");
markH.setAttribute("d", "M420 13h10l-5 6z");
markH.setAttribute("fill", "#444");
svgH.appendChild(markH);
const markV = document.createElementNS(NS, "path");
markV.setAttribute("d", "M12 258v10l6-5z");
markV.setAttribute("fill", "#444");
svgV.appendChild(markV);
```
